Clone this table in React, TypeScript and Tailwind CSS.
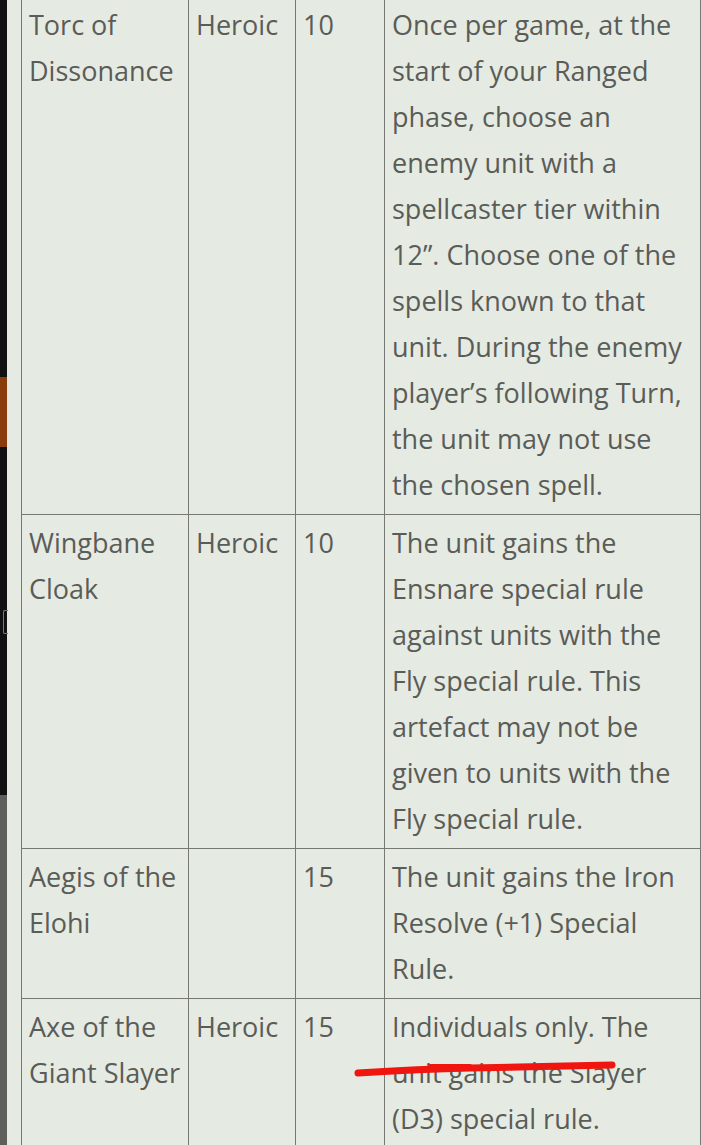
import React from 'react';

interface Row {
  name: string[];
  tier: string;
  points: string;
  effect: string[];
}

// line breaks follow the narrow mobile column of the source page
const rows: Row[] = [
  {
    name: ['Torc of', 'Dissonance'],
    tier: 'Heroic',
    points: '10',
    effect: [
      'Once per game, at the',
      'start of your Ranged',
      'phase, choose an',
      'enemy unit with a',
      'spellcaster tier within',
      '12”. Choose one of the',
      'spells known to that',
      'unit. During the enemy',
      'player’s following Turn,',
      'the unit may not use',
      'the chosen spell.',
    ],
  },
  {
    name: ['Wingbane', 'Cloak'],
    tier: 'Heroic',
    points: '10',
    effect: [
      'The unit gains the',
      'Ensnare special rule',
      'against units with the',
      'Fly special rule. This',
      'artefact may not be',
      'given to units with the',
      'Fly special rule.',
    ],
  },
  {
    name: ['Aegis of the', 'Elohi'],
    tier: '',
    points: '15',
    effect: ['The unit gains the Iron', 'Resolve (+1) Special', 'Rule.'],
  },
  {
    name: ['Axe of the', 'Giant Slayer'],
    tier: 'Heroic',
    points: '15',
    effect: ['Individuals only. The', 'unit gains the Slayer', '(D3) special rule.'],
  },
];

const cell = 'border border-[#767873] align-top pt-[5px] pb-[6px] pl-[7px] pr-[4px] whitespace-nowrap';

const Lines: React.FC<{ lines: string[] }> = ({ lines }) => (
  <>
    {lines.map((l, i) => (
      <div key={i}>{l}</div>
    ))}
  </>
);

const SideStrip: React.FC = () => (
  <div className="flex w-[7px] shrink-0 flex-col">
    <div className="h-[377px] bg-[#111111]" />
    <div className="h-[70px] bg-[#8a3d0c]" />
    <div className="relative h-[348px] bg-[#111111]">
      <div className="absolute left-[3px] top-[163px] h-[24px] w-[5px] rounded-l-[2px] border border-r-0 border-[#777]" />
    </div>
    <div className="flex-1 bg-[#5e5f5a]" />
  </div>
);

export default function App() {
  return (
    <div className="relative flex h-[1145px] w-[701px] overflow-hidden bg-[#e5eae2] font-['Open_Sans','Noto_Sans',sans-serif] text-[27px] leading-[46px] text-[#5a5c58]">
      <SideStrip />
      <div className="pl-[14px] -mt-[4px]">
        <table className="w-[679px] table-fixed border-collapse">
          <colgroup>
            <col className="w-[167px]" />
            <col className="w-[107px]" />
            <col className="w-[89px]" />
            <col className="w-[316px]" />
          </colgroup>
          <tbody>
            {rows.map(r => (
              <tr key={r.name.join(' ')}>
                <td className={cell}>
                  <Lines lines={r.name} />
                </td>
                <td className={cell}>{r.tier}</td>
                <td className={`${cell} pl-[5px]`}>{r.points}</td>
                <td className={cell}>
                  <Lines lines={r.effect} />
                </td>
              </tr>
            ))}
          </tbody>
        </table>
      </div>
      {/* hand-drawn red strike over the last row */}
      <svg className="pointer-events-none absolute left-0 top-0" width="701" height="1145">
        <path
          d="M358 1073 Q 420 1069 470 1068 T 612 1065"
          stroke="#f0150f"
          strokeWidth="7"
          strokeLinecap="round"
          fill="none"
        />
        <path d="M430 1066 L 470 1066" stroke="#f0150f" strokeWidth="4" strokeLinecap="round" />
      </svg>
    </div>
  );
}
